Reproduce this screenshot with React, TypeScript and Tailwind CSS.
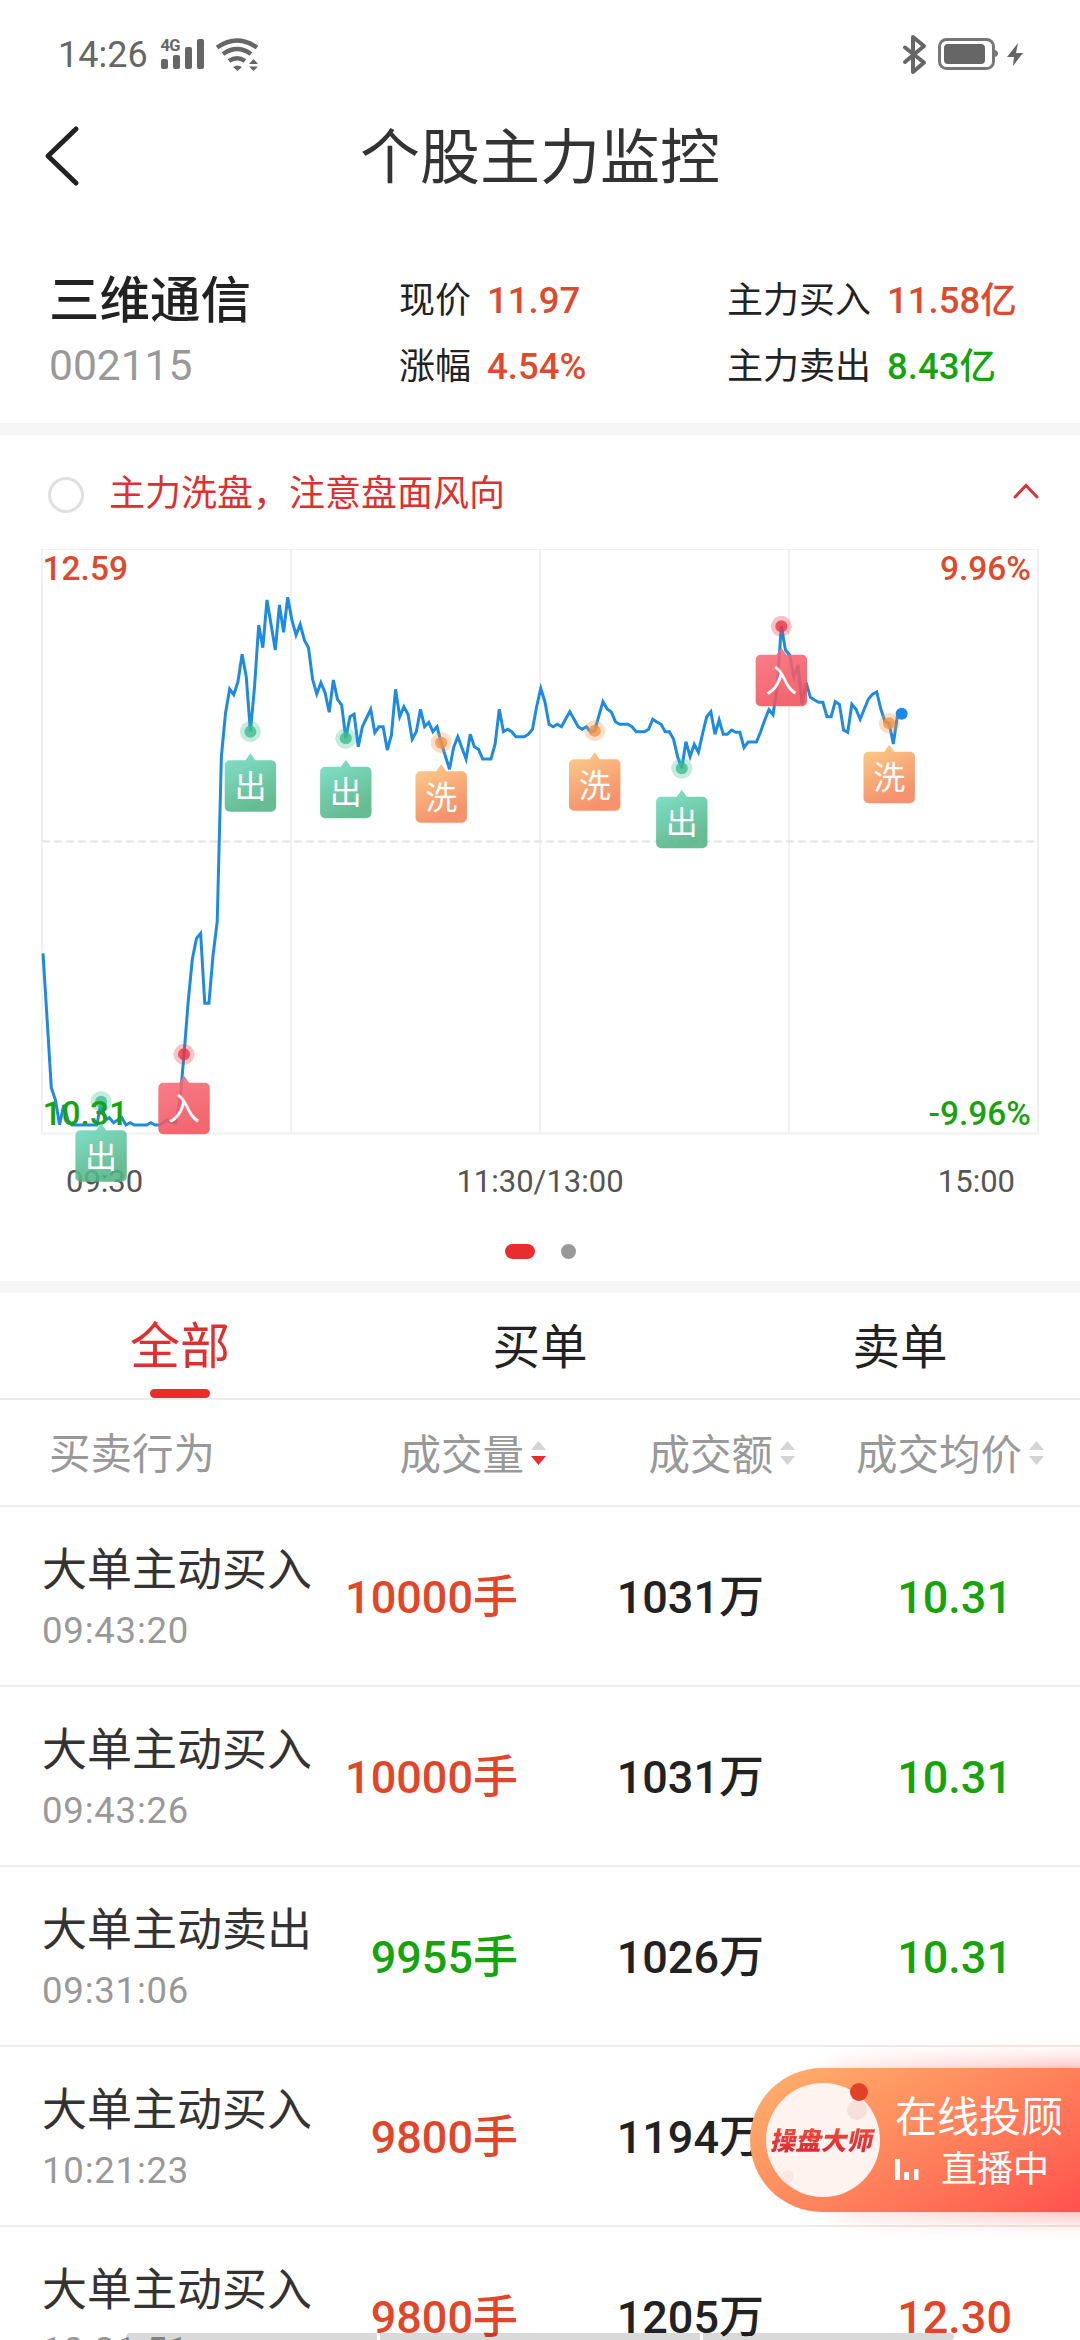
import { clsx } from "clsx";

type Signal = "out" | "in" | "wash";

// Distance from the top of the plot, one entry per trading minute
const LINE = [
  404.3, 471, 538.7, 551, 575.7, 556, 571, 576, 576, 576, 576, 576, 576, 576, 552.7, 571, 568.7, 573.7, 571, 568.7,
  576, 573.7, 576, 576, 576, 576, 573.7, 576, 576, 573.5, 571.3, 573.7, 573.7, 552.7, 505.3, 452.7, 410.3, 389.3, 384.3, 454.3,
  454.3, 406, 372.7, 207.7, 164.3, 140, 145.7, 132.7, 105.3, 127.7, 182.7, 137.7, 76, 98.7, 51, 76, 101, 56, 83.3, 48.3,
  71, 86, 75.3, 91, 98.7, 130.3, 145, 133.7, 143.7, 163.3, 131, 150.3, 156, 189.3, 167.7, 165.3, 197.7, 177.7, 169, 160.3,
  183.7, 177.7, 177.7, 201, 186, 140.3, 167.7, 157.7, 165.3, 190.3, 182.7, 160.3, 177.7, 173.3, 182.7, 177.7, 193.7, 207, 220.3, 198.3,
  187.7, 199, 210, 185.3, 197.7, 200.3, 210, 210, 210, 195, 160.3, 182.7, 180.3, 182.7, 187.7, 187.7, 187.7, 185.3, 180.3, 157.7,
  139.3, 152.7, 175.3, 177.7, 175.3, 177.7, 170, 162.7, 170, 177.7, 180.3, 177.7, 182.7, 181.7, 167, 152.7, 160, 163, 172.7, 175.3,
  175.3, 175.3, 177.7, 182.7, 182.7, 182.7, 180.3, 170.3, 173, 175.3, 182.7, 182.7, 190, 207.7, 219.3, 192.7, 207.7, 195.3, 203.3, 185,
  167.7, 162.7, 185.3, 171, 185.3, 185.3, 181, 183.3, 183.3, 198.7, 193, 193, 193, 182.7, 171, 160.7, 165.7, 137.7, 77.3, 101,
  106, 127.7, 116, 155.3, 133.7, 148.3, 151, 153.3, 153.3, 167.7, 167.7, 152.7, 155.3, 181, 183.3, 155.3, 160.3, 170.3, 160, 150,
  145.3, 143, 160.3, 172.7, 174.3, 195, 166, 164.7,
];

const MARKERS: { minute: number; signal: Signal }[] = [
  { minute: 14, signal: "out" },
  { minute: 34, signal: "in" },
  { minute: 50, signal: "out" },
  { minute: 73, signal: "out" },
  { minute: 96, signal: "wash" },
  { minute: 133, signal: "wash" },
  { minute: 154, signal: "out" },
  { minute: 178, signal: "in" },
  { minute: 204, signal: "wash" },
];

const SIGNALS: Record<Signal, { label: string; dot: string; from: string; to: string }> = {
  out: { label: "出", dot: "#3dbd90", from: "#6fdbc0", to: "#52b384" },
  in: { label: "入", dot: "#ec3543", from: "#f96c78", to: "#f0525c" },
  wash: { label: "洗", dot: "#f59142", from: "#f9c476", to: "#f5835a" },
};

const ORDERS = [
  { action: "大单主动买入", time: "09:43:20", volume: "10000手", amount: "1031万", price: "10.31", buy: true, up: false },
  { action: "大单主动买入", time: "09:43:26", volume: "10000手", amount: "1031万", price: "10.31", buy: true, up: false },
  { action: "大单主动卖出", time: "09:31:06", volume: "9955手", amount: "1026万", price: "10.31", buy: false, up: false },
  { action: "大单主动买入", time: "10:21:23", volume: "9800手", amount: "1194万", price: "12.18", buy: true, up: true },
  { action: "大单主动买入", time: "10:21:51", volume: "9800手", amount: "1205万", price: "12.30", buy: true, up: true },
];

const NUMERIC = "font-['Roboto','Noto_Sans_CJK_SC',sans-serif]";

const minuteX = (i: number) => 43 + i * 4.148;

export default function App() {
  return (
    <div className="relative flex h-[2340px] w-[1080px] flex-col overflow-hidden bg-white font-['Noto_Sans_CJK_SC',sans-serif] text-[#222]">
      <StatusBar />
      <header className="grid h-[104px] shrink-0 grid-cols-[120px_1fr_120px] items-center">
        <svg className="ml-[40px]" width="44" height="64" viewBox="0 0 44 64" fill="none">
          <path d="M36 5 8 32l28 27" stroke="#222" strokeWidth="5" strokeLinecap="round" strokeLinejoin="round" />
        </svg>
        <h1 className="pb-[6px] text-center text-[60px] leading-[98px] text-[#333]">个股主力监控</h1>
      </header>
      <Summary />
      <div className="h-[12px] shrink-0 bg-[#f6f6f6]" />
      <section className="shrink-0">
        <div className="flex h-[114px] items-center pr-[40px] pl-[48px]">
          <span className="mt-[6px] size-[36px] rounded-full border-[3px] border-[#e0e0e0]" />
          <span className="-mt-[4px] ml-[25px] flex-1 text-[36px] leading-[110px] text-[#e02f2f]">主力洗盘，注意盘面风向</span>
          <svg className="mb-[2px]" width="28" height="18" viewBox="0 0 28 18" fill="none">
            <path d="m3 15 11-11.500L25 15" stroke="#d8343a" strokeWidth="3" strokeLinecap="round" />
          </svg>
        </div>
        <Chart />
        <div className="flex h-[72px] justify-center gap-[26px] pt-[35px]">
          <span className="h-[15px] w-[30px] rounded-full bg-[#e92c2d]" />
          <span className="size-[15px] rounded-full bg-[#999]" />
        </div>
      </section>
      <div className="h-[12px] shrink-0 bg-[#f6f6f6]" />
      <Tabs />
      <OrderTable />
      <LiveAdvisor />
      <div className="absolute bottom-0 left-[126px] flex h-[7px] gap-[3px]">
        <span className="w-[251px] rounded-tl bg-black/15" />
        <span className="w-[320px] bg-black/15" />
        <span className="w-[251px] rounded-r bg-black/15" />
      </div>
    </div>
  );
}

function StatusBar() {
  return (
    <div className="flex h-[104px] shrink-0 items-start pt-[34px] pr-[55px] pl-[58px] text-[#666]">
      <span className="w-[90px] font-['Roboto',sans-serif] text-[36px] leading-[43px]">14:26</span>
      <svg className="ml-[10px]" width="104" height="42" viewBox="158 34 104 42" fill="#666">
        <text x="160.500" y="51" fontSize="16.500" fontWeight="700" fontFamily="Roboto" textLength="20">4G</text>
        <rect x="161" y="59" width="7" height="10" rx="2" />
        <rect x="173" y="55" width="7" height="14" rx="2" />
        <rect x="185" y="47" width="7" height="22" rx="2" />
        <rect x="197" y="39" width="7" height="30" rx="2" />
        <g fill="none" stroke="#666" strokeWidth="4.500">
          <path d="M217 47.500q20-14 40 0" />
          <path d="M223 54q14-10 28 0" />
          <path d="M229 61q8-5.500 16 0" />
        </g>
        <path d="m233 67 4.500 4 4.500-4q-4.500-3-9 0zM249 64l4.500-5 4.500 5zM249 66.500l4.500 4.500 4.500-4.500z" />
      </svg>
      <svg className="ml-auto" width="124" height="42" viewBox="901 34 124 42" fill="none">
        <path d="m905 47.500 19 15L913 72V37l11 9-19 16" stroke="#666" strokeWidth="4" strokeLinejoin="round" strokeLinecap="round" />
        <rect x="939.500" y="39.500" width="54" height="29" rx="7" stroke="#777" strokeWidth="3" />
        <rect x="944" y="44" width="41" height="20" rx="4" fill="#666" />
        <path d="M995 50q3 1 3 3.500t-3 3.500z" fill="#777" />
        <path d="m1018 43-11 14h7l-1 9 10-13h-7z" fill="#666" />
      </svg>
    </div>
  );
}

function Summary() {
  return (
    <section className="flex h-[215px] shrink-0 pt-[58px] pl-[49px]">
      <div className="w-[350px]">
        <p className="text-[50.500px] leading-[60px] font-medium">三维通信</p>
        <p className={clsx("text-[42.500px] leading-[80px] text-[#999]", NUMERIC)}>002115</p>
      </div>
      <div className="-mt-[2px] w-[328px]">
        <Quote label="现价" value="11.97" color="text-[#dd4a2e]" />
        <Quote label="涨幅" value="4.54%" color="text-[#dd4a2e]" />
      </div>
      <div className="-mt-[2px]">
        <Quote label="主力买入" value="11.58亿" color="text-[#dd4a2e]" />
        <Quote label="主力卖出" value="8.43亿" color="text-[#17a30d]" />
      </div>
    </section>
  );
}

function Quote({ label, value, color }: { label: string; value: string; color: string }) {
  return (
    <p className="flex h-[66px] items-baseline gap-[16px] text-[36px] leading-[66px] whitespace-nowrap">
      <span>{label}</span>
      <span className={clsx("text-[36.500px] font-medium", NUMERIC, color)}>{value}</span>
    </p>
  );
}

function Chart() {
  const points = LINE.map((y, i) => `${minuteX(i)},${y}`).join(" ");
  const last = LINE.length - 1;

  return (
    <svg className="block overflow-visible" width="1080" height="660" viewBox="0 0 1080 660">
      <defs>
        {Object.entries(SIGNALS).map(([key, s]) => (
          <linearGradient key={key} id={key} x1="0.2" y1="0" x2="0.6" y2="1">
            <stop offset="0" stopColor={s.from} />
            <stop offset="0.9" stopColor={s.to} />
          </linearGradient>
        ))}
      </defs>

      <g stroke="#f1f1f1" strokeWidth="2" fill="none">
        <path d="M41 .5h998" strokeWidth="1" />
        <path d="M41 584.500h998M42 0v585M291 0v585M540 0v585M789 0v585M1038 0v585" />
        <path d="M42 292.500h993" stroke="#e4e4e4" strokeDasharray="8 4" />
      </g>

      <polyline points={points} fill="none" stroke="#1f8be0" strokeWidth="3" />
      <circle cx={minuteX(last)} cy={LINE[last]} r="6" fill="#1989f0" />

      {MARKERS.map(({ minute, signal }) => (
        <g key={minute} fill={SIGNALS[signal].dot}>
          <circle cx={minuteX(minute)} cy={LINE[minute]} r="10.500" opacity="0.3" />
          <circle cx={minuteX(minute)} cy={LINE[minute]} r="6" opacity="0.8" />
        </g>
      ))}

      {/* Axis labels */}
      <g className={NUMERIC} fontSize="33.500" fontWeight="500">
        <text x="42.500" y="31" fill="#dd4a2e">12.59</text>
        <text x="1031" y="31" fill="#dd4a2e" textAnchor="end">9.96%</text>
        <text x="42.500" y="576" fill="#17a30d">10.31</text>
        <text x="1031" y="576" fill="#17a30d" textAnchor="end">-9.96%</text>
      </g>
      <g className={NUMERIC} fontSize="31" fill="#555">
        <text x="66" y="643">09:30</text>
        <text x="540" y="643" textAnchor="middle">11:30/13:00</text>
        <text x="1015" y="643" textAnchor="end">15:00</text>
      </g>

      {MARKERS.map(({ minute, signal }) => (
        <g key={minute} transform={`translate(${minuteX(minute)} ${LINE[minute]})`}>
          <path
            d="M-20.700 28.500H-5L0 21.500 5 28.500H20.700a5 5 0 0 1 5 5V75a5 5 0 0 1-5 5H-20.700a5 5 0 0 1-5-5V33.500a5 5 0 0 1 5-5z"
            fill={`url(#${signal})`}
            opacity="0.88"
          />
          <text x="0" y="66" fontSize="32" fill="#fff" textAnchor="middle">
            {SIGNALS[signal].label}
          </text>
        </g>
      ))}
    </svg>
  );
}

function Tabs() {
  return (
    <nav className="grid h-[107px] shrink-0 grid-cols-3 border-b-2 border-[#ececec] text-center text-[47.500px] leading-[102px]">
      <div className="flex flex-col items-center justify-between">
        <span className="pt-[3px] text-[50px] leading-[93px] text-[#e02f2f]">全部</span>
        <span className="h-[9px] w-[60px] shrink-0 rounded-full bg-[#e92c2d]" />
      </div>
      <div>买单</div>
      <div>卖单</div>
    </nav>
  );
}

function SortLabel({ label, active }: { label: string; active?: boolean }) {
  return (
    <div className="flex items-center justify-end gap-[7px]">
      <span>{label}</span>
      <svg width="15" height="24" viewBox="0 0 15 24">
        <path d="M0 9 7.500 0 15 9z" fill="#d4d4d4" />
        <path d="M0 15h15l-7.500 9z" fill={active ? "#e92c2d" : "#d4d4d4"} />
      </svg>
    </div>
  );
}

function OrderTable() {
  return (
    <section>
      <div className="grid h-[107px] grid-cols-[298px_199px_249px_249px] border-b-2 border-[#ececec] pl-[49px] text-[41.500px] leading-[103px] text-[#999]">
        <span>买卖行为</span>
        <SortLabel label="成交量" active />
        <SortLabel label="成交额" />
        <SortLabel label="成交均价" />
      </div>
      {ORDERS.map((o) => (
        <div
          key={o.time}
          className="grid h-[180px] grid-cols-[280px_196px_246px_248px] items-center border-b-2 border-[#ececec] pl-[42px] text-right whitespace-nowrap"
        >
          <div className="pt-[6px] text-left">
            <p className="text-[45px] leading-[60px] text-[#333]">{o.action}</p>
            <p className={clsx("mt-[4px] text-[36.500px] leading-[60px] tracking-[0.8px] text-[#999]", NUMERIC)}>{o.time}</p>
          </div>
          <Figure value={o.volume} color={o.buy ? "text-[#e2462a]" : "text-[#17a30d]"} />
          <Figure value={o.amount} color="text-[#222]" />
          <Figure value={o.price} color={o.up ? "text-[#e2462a]" : "text-[#17a30d]"} />
        </div>
      ))}
    </section>
  );
}

function Figure({ value, color }: { value: string; color: string }) {
  return (
    <span className={clsx("mt-[3px] text-[45px] leading-[60px] font-medium", NUMERIC, color)}>{value}</span>
  );
}

function LiveAdvisor() {
  return (
    <div className="absolute top-[2068px] right-0 h-[144px] w-[330px]">
      <div className="absolute inset-y-[-4px] right-[-20px] left-[40px] rounded-l-full bg-linear-to-r from-[#ff6b5a]/10 to-[#ff4040]/50 blur-[12px]" />
      <div className="relative flex h-full items-center rounded-l-full bg-linear-150 from-[#ffaa6a] from-10% to-[#ff504d] pl-[16px] text-white">
        <div className="relative flex size-[114px] shrink-0 items-center justify-center rounded-full bg-[#fff3ef]">
          <span className="absolute top-[17px] right-[13px] size-[20px] rounded-full bg-[#f8e0da]" />
          <span className="absolute bottom-[14px] left-[15px] size-[13px] rounded-full bg-[#fbe7e2]" />
          <span className="relative mb-[3px] -skew-x-12 bg-linear-to-b from-[#f4513a] to-[#dc1f35] bg-clip-text text-[25.500px] leading-[32px] font-black whitespace-nowrap text-transparent">
            操盘大师
          </span>
          <span className="absolute top-0 right-[12px] size-[18px] rounded-full bg-[#e24126]" />
        </div>
        <div className="ml-[15px] flex flex-col whitespace-nowrap">
          <span className="text-[42px] leading-[52px]">在线投顾</span>
          <div className="flex items-center gap-[22px] text-[36px] leading-[52px]">
            <svg className="mt-[7px]" width="24" height="21" viewBox="0 0 24 21" fill="#fff">
              <rect x="0" width="5" height="21" />
              <rect x="9" y="13" width="5" height="8" />
              <rect x="19" y="10" width="4.500" height="11" />
            </svg>
            <span>直播中</span>
          </div>
        </div>
      </div>
    </div>
  );
}
